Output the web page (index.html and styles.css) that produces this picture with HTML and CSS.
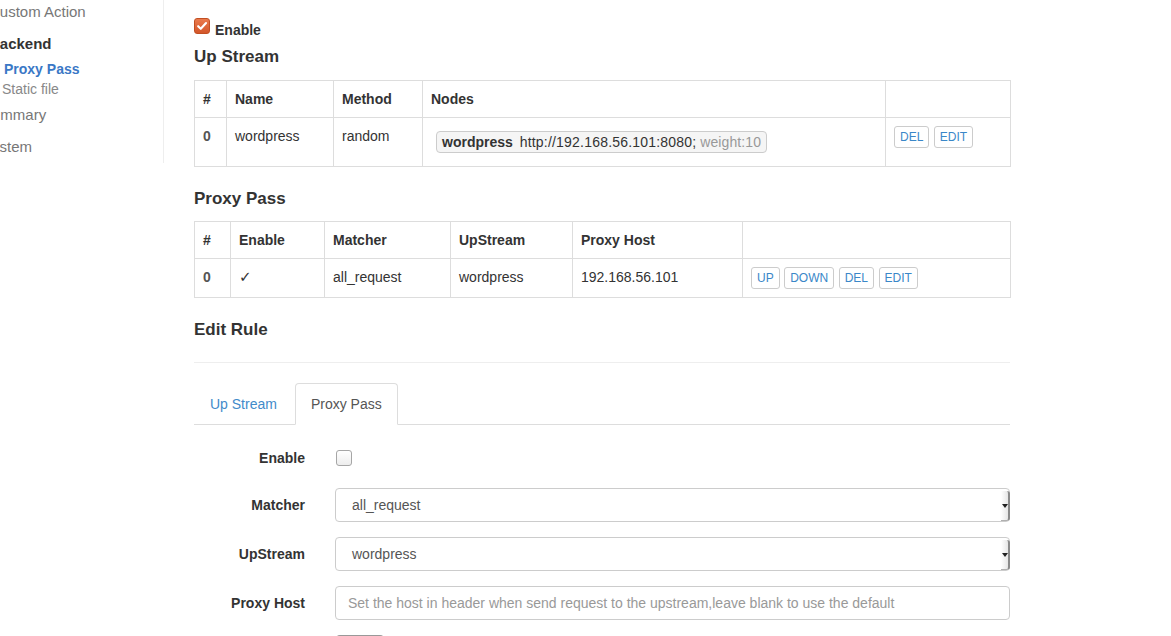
FILE: index.html
```html
<!DOCTYPE html>
<html>
<head>
<meta charset="utf-8">
<link rel="stylesheet" href="styles.css">
</head>
<body>
<div class="page">
  <nav class="sidebar">
    <div class="nav-item top ca">Custom Action</div>
    <div class="nav-group">Backend</div>
    <div class="nav-sub active">Proxy Pass</div>
    <div class="nav-sub static">Static file</div>
    <div class="nav-item top sum">Summary</div>
    <div class="nav-item top sys">System</div>
  </nav>
  <main class="main">
    <label class="enable-row">
      <span class="check-on"><svg viewBox="0 0 16 16" width="16" height="16"><path d="M3.6 8.2 L6.6 11.2 L12.6 4.6" fill="none" stroke="#fff" stroke-width="2.4" stroke-linecap="round" stroke-linejoin="round"/></svg></span>
      <span>Enable</span>
    </label>

    <h4 class="heading first">Up Stream</h4>
    <table class="grid up">
      <colgroup><col class="c1"><col class="c2"><col class="c3"><col class="c4"><col class="c5"></colgroup>
      <thead><tr><th>#</th><th>Name</th><th>Method</th><th>Nodes</th><th></th></tr></thead>
      <tbody><tr>
        <th class="idx">0</th><td>wordpress</td><td>random</td>
        <td><span class="node"><b>wordpress</b> <span class="url">http://192.168.56.101:8080;</span> <span class="weight">weight:10</span></span></td>
        <td><div class="btns"><button class="btn">DEL</button><button class="btn">EDIT</button></div></td>
      </tr></tbody>
    </table>

    <h4 class="heading">Proxy Pass</h4>
    <table class="grid pp">
      <colgroup><col class="c1"><col class="c2"><col class="c3"><col class="c4"><col class="c5"><col class="c6"></colgroup>
      <thead><tr><th>#</th><th>Enable</th><th>Matcher</th><th>UpStream</th><th>Proxy Host</th><th></th></tr></thead>
      <tbody><tr>
        <th class="idx">0</th><td class="tick">✓</td><td>all_request</td><td>wordpress</td><td>192.168.56.101</td>
        <td><div class="btns"><button class="btn">UP</button><button class="btn">DOWN</button><button class="btn">DEL</button><button class="btn">EDIT</button></div></td>
      </tr></tbody>
    </table>

    <h4 class="heading">Edit Rule</h4>
    <hr class="rule">

    <ul class="tabs">
      <li class="tab">Up Stream</li>
      <li class="tab active">Proxy Pass</li>
    </ul>

    <form class="form">
      <div class="row short">
        <label class="lbl">Enable</label>
        <div class="ctl"><span class="check-off"></span></div>
      </div>
      <div class="row">
        <label class="lbl">Matcher</label>
        <div class="ctl"><div class="select">all_request<span class="arrow"></span></div></div>
      </div>
      <div class="row">
        <label class="lbl">UpStream</label>
        <div class="ctl"><div class="select">wordpress<span class="arrow"></span></div></div>
      </div>
      <div class="row">
        <label class="lbl">Proxy Host</label>
        <div class="ctl"><input class="input" type="text" placeholder="Set the host in header when send request to the upstream,leave blank to use the default"></div>
      </div>
      <div class="row">
        <div class="lbl"></div>
        <div class="ctl"><button type="button" class="save">Save</button></div>
      </div>
    </form>
  </main>
</div>
</body>
</html>
```

FILE: styles.css
```css
* { box-sizing: border-box; }
html, body { margin: 0; padding: 0; background: #fff; }
body {
  font-family: "Liberation Sans", Arial, sans-serif;
  font-size: 14px;
  line-height: 20px;
  color: #333;
  overflow: hidden;
}
.page { display: flex; align-items: flex-start; }

/* sidebar */
.sidebar {
  margin-left: -24px;
  width: 188px;
  flex: none;
  border-right: 1px solid #eee;
  padding-top: 2px;
  padding-bottom: 6px;
}
.nav-item, .nav-group, .nav-sub { line-height: 20px; white-space: nowrap; }
.nav-item.top { font-size: 15px; color: #777; padding-left: 6px; }
.nav-item.ca { padding-left: 13px; }
.nav-group { font-size: 15px; font-weight: bold; color: #333; padding-left: 13px; margin-top: 12px; margin-bottom: 5px; }
.nav-sub { color: #888; padding-left: 26px; }
.nav-sub.active { color: #3a78c6; font-weight: bold; padding-left: 28px; }
.nav-item.sum { margin-top: 6px; }
.nav-item.sys { margin-top: 12px; }

/* main */
.main { margin-left: 30px; width: 816px; padding-top: 20px; flex: none; display: flex; flex-direction: column; }
.enable-row { display: flex; align-items: flex-start; gap: 5px; font-weight: bold; margin-bottom: 4px; height: 20px; }
.check-on {
  width: 16px; height: 16px; border-radius: 3px; flex: none;
  background: linear-gradient(#ea7a4c, #d3562a);
  border: 1px solid #c24f22;
  display: flex; align-items: center; justify-content: center;
  margin-top: -2px;
}
.check-on svg { width: 14px; height: 14px; }

.heading { font-size: 17px; font-weight: bold; line-height: 20px; margin: 3px 0 12px; color: #333; }
.heading.first { margin-bottom: 13px; }

.grid { border-collapse: collapse; table-layout: fixed; width: 816px; margin-bottom: 19px; }
.grid th, .grid td { border: 1px solid #ddd; padding: 8px; text-align: left; vertical-align: top; line-height: 20px; }
.grid thead th { font-weight: bold; }
.grid th.idx { color: #555; font-weight: bold; }
.up .c1 { width: 32px; } .up .c2 { width: 107px; } .up .c3 { width: 89px; } .up .c4 { width: 463px; } .up .c5 { width: 125px; }
.pp .c1 { width: 36px; } .pp .c2 { width: 94px; } .pp .c3 { width: 126px; } .pp .c4 { width: 122px; } .pp .c5 { width: 170px; } .pp .c6 { width: 268px; }
.tick { font-family: "DejaVu Sans", sans-serif; font-size: 15px; }

.node {
  display: inline-block;
  margin: 5px 0 5px 5px;
  padding: 0 5px;
  background: #f5f5f5;
  border: 1px solid #ccc;
  border-radius: 4px;
  line-height: 20px;
  white-space: nowrap;
}
.node b { margin-right: 3px; }
.url { letter-spacing: 0.2px; }
.weight { color: #999; letter-spacing: 0.1px; }

.btns { display: flex; gap: 4.5px; }
.btn {
  font-family: "Liberation Sans", Arial, sans-serif;
  font-size: 12px;
  line-height: 18px;
  padding: 1px 5px;
  border: 1px solid #ccc;
  border-radius: 3px;
  background: #fff;
  color: #3a87c8;
}

.rule { border: 0; border-top: 1px solid #eee; margin: 10px 0 20px; height: 0; width: 100%; }

.tabs { list-style: none; margin: 0; padding: 0; display: flex; border-bottom: 1px solid #ddd; }
.tab {
  padding: 10px 15px; line-height: 20px; margin-right: 2px; margin-bottom: -1px;
  border: 1px solid transparent; border-radius: 4px 4px 0 0; color: #428bca;
}
.tab.active { color: #555; border-color: #ddd; border-bottom-color: #fff; background: #fff; }

.form { padding-top: 17px; display: flex; flex-direction: column; gap: 15px; }
.row { display: flex; align-items: center; height: 34px; }
.row.short { height: 31px; }
.lbl { width: 111px; text-align: right; font-weight: bold; flex: none; }
.ctl { margin-left: 30px; flex: 1; display: flex; align-items: center; }
.check-off {
  width: 16px; height: 16px; border: 1px solid #a6a6a6; border-radius: 3px;
  background: linear-gradient(#fff, #ededed); margin-left: 1px;
}
.select {
  position: relative;
  width: 100%; height: 34px;
  border: 1px solid #ccc; border-radius: 4px;
  padding: 6px 16px; line-height: 20px; color: #555;
}
.arrow {
  position: absolute; right: -1px; top: 2px; bottom: 0;
  width: 9px;
  background: linear-gradient(to right, #fff, #e6e6e6);
  border-right: 2px solid #8a8a8a;
  border-bottom: 1px solid #b0b0b0;
  border-radius: 0 3px 3px 0;
}
.arrow::after {
  content: ""; position: absolute; left: 1px; top: 13px;
  border-left: 3px solid transparent; border-right: 3px solid transparent; border-top: 4px solid #222;
}
.input {
  width: 100%; height: 34px;
  border: 1px solid #ccc; border-radius: 4px;
  padding: 6px 12px;
  font-family: "Liberation Sans", Arial, sans-serif; font-size: 14px; color: #555;
}
.input::placeholder { color: #999; }
.save {
  margin-left: 1px; width: 48px; height: 34px;
  border: 1px solid #ccc; border-top-color: #999; border-radius: 4px; background: #fff;
  font-family: "Liberation Sans", Arial, sans-serif; font-size: 14px; color: #333;
}
```
